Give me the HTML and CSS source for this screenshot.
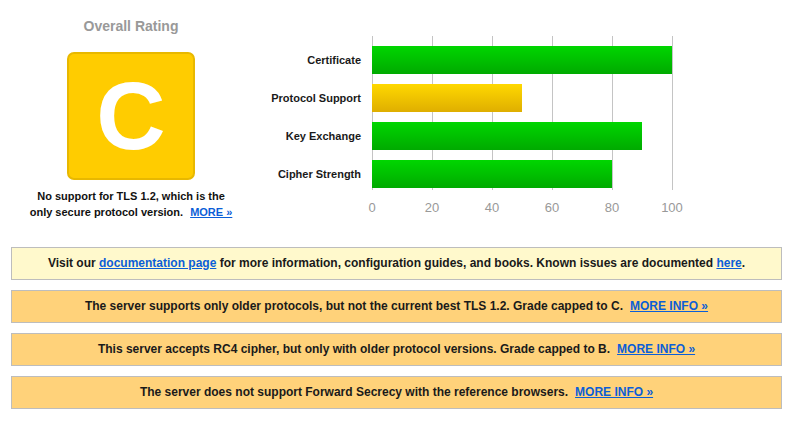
FILE: index.html
```html
<!DOCTYPE html>
<html>
<head>
<meta charset="utf-8">
<link rel="stylesheet" href="styles.css">
</head>
<body>
<div class="page">
  <div class="top">
    <div class="rating">
      <div class="rating-title">Overall Rating</div>
      <div class="grade">C</div>
      <div class="rating-note">No support for TLS 1.2, which is the<br>only secure protocol version.<a href="#" class="link more">MORE&nbsp;»</a></div>
    </div>
    <div class="chart">
      <div class="chart-body">
        <div class="labels">
          <div class="label">Certificate</div>
          <div class="label">Protocol Support</div>
          <div class="label">Key Exchange</div>
          <div class="label">Cipher Strength</div>
        </div>
        <div class="plot">
          <div class="bar green" style="width:300px"></div>
          <div class="bar yellow" style="width:150px"></div>
          <div class="bar green" style="width:270px"></div>
          <div class="bar green" style="width:240px"></div>
        </div>
      </div>
      <div class="ticks">
        <span>0</span><span>20</span><span>40</span><span>60</span><span>80</span><span>100</span>
      </div>
    </div>
  </div>
  <div class="notices">
    <div class="notice info">Visit our <a href="#" class="link">documentation page</a> for more information, configuration guides, and books. Known issues are documented <a href="#" class="link">here</a>.</div>
    <div class="notice warn">The server supports only older protocols, but not the current best TLS 1.2. Grade capped to C.<a href="#" class="link more">MORE INFO »</a></div>
    <div class="notice warn">This server accepts RC4 cipher, but only with older protocol versions. Grade capped to B.<a href="#" class="link more">MORE INFO »</a></div>
    <div class="notice warn">The server does not support Forward Secrecy with the reference browsers.<a href="#" class="link more">MORE INFO »</a></div>
  </div>
</div>
</body>
</html>
```
FILE: styles.css
```css
html, body {
  margin: 0;
  padding: 0;
  background: #ffffff;
}
body {
  font-family: "Liberation Sans", Arial, Helvetica, sans-serif;
  color: #1a1a1a;
  font-weight: bold;
}
.page {
  width: 795px;
}
.top {
  display: flex;
  height: 236px;
}
.rating {
  width: 262px;
  display: flex;
  flex-direction: column;
  align-items: center;
}
.rating-title {
  margin-top: 17px;
  font-size: 14px;
  line-height: 18px;
  color: #999999;
}
.grade {
  margin-top: 17px;
  width: 124px;
  height: 124px;
  box-sizing: content-box;
  background: #ffcc00;
  border: 2px solid #e8b800;
  border-radius: 7px;
  color: #ffffff;
  font-size: 96px;
  line-height: 124px;
  text-align: center;
}
.rating-note {
  margin-top: 8px;
  width: 220px;
  font-size: 11px;
  line-height: 16px;
  text-align: center;
  color: #111111;
}
.link {
  color: #0b5ed7;
  text-decoration: underline;
}
.more {
  margin-left: 7px;
}
.chart {
  display: flex;
  flex-direction: column;
  padding-top: 36px;
}
.chart-body {
  display: flex;
}
.labels {
  width: 99px;
  padding-top: 10px;
  display: flex;
  flex-direction: column;
  gap: 10px;
  margin-right: 11px;
}
.label {
  height: 28px;
  line-height: 29px;
  font-size: 11px;
  text-align: right;
  white-space: nowrap;
  color: #1a1a1a;
}
.plot {
  width: 301px;
  padding: 10px 0 2px;
  display: flex;
  flex-direction: column;
  gap: 10px;
  background-image: repeating-linear-gradient(to right, #c4c4c4 0, #c4c4c4 1px, transparent 1px, transparent 60px);
}
.bar {
  height: 28px;
}
.green {
  background: linear-gradient(to bottom, #00d600, #00aa00);
}
.yellow {
  background: linear-gradient(to bottom, #ffd800, #dfae00);
}
.ticks {
  display: flex;
  margin-left: 80px;
  margin-top: 10px;
  font-size: 13px;
  font-weight: normal;
  color: #999999;
}
.ticks span {
  width: 60px;
  text-align: center;
}
.notices {
  margin: 11px 0 0 11px;
  width: 771px;
  display: flex;
  flex-direction: column;
  gap: 10px;
}
.notice {
  box-sizing: border-box;
  height: 33px;
  line-height: 31px;
  border: 1px solid #bdbdbd;
  text-align: center;
  font-size: 12px;
  color: #1a1a1a;
  white-space: nowrap;
}
.info {
  background: #fff9cc;
}
.warn {
  background: #ffd27a;
}
```
